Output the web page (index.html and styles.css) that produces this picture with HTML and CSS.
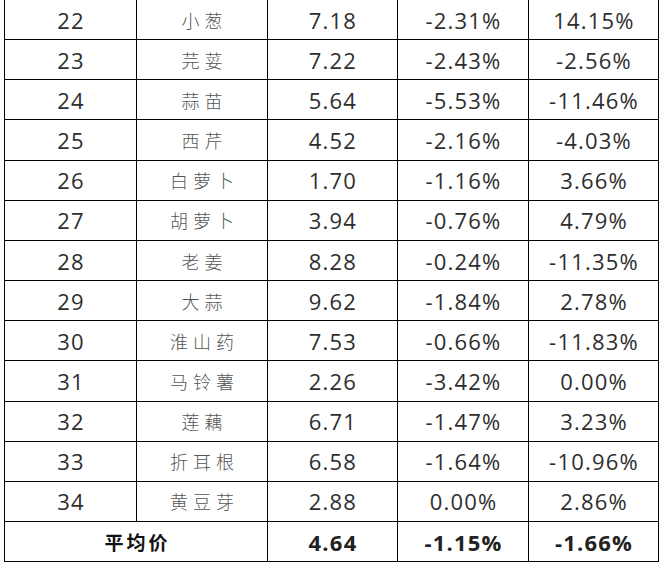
FILE: index.html
```html
<!DOCTYPE html>
<html lang="zh">
<head>
<meta charset="utf-8">
<link rel="stylesheet" href="styles.css">
</head>
<body>
<table class="price-table">
  <colgroup>
    <col class="c1"><col class="c2"><col class="c3"><col class="c4"><col class="c5">
  </colgroup>
  <tbody>
    <tr><td>22</td><td class="name">小葱</td><td>7.18</td><td>-2.31%</td><td>14.15%</td></tr>
    <tr><td>23</td><td class="name">芫荽</td><td>7.22</td><td>-2.43%</td><td>-2.56%</td></tr>
    <tr><td>24</td><td class="name">蒜苗</td><td>5.64</td><td>-5.53%</td><td>-11.46%</td></tr>
    <tr><td>25</td><td class="name">西芹</td><td>4.52</td><td>-2.16%</td><td>-4.03%</td></tr>
    <tr><td>26</td><td class="name">白萝卜</td><td>1.70</td><td>-1.16%</td><td>3.66%</td></tr>
    <tr><td>27</td><td class="name">胡萝卜</td><td>3.94</td><td>-0.76%</td><td>4.79%</td></tr>
    <tr><td>28</td><td class="name">老姜</td><td>8.28</td><td>-0.24%</td><td>-11.35%</td></tr>
    <tr><td>29</td><td class="name">大蒜</td><td>9.62</td><td>-1.84%</td><td>2.78%</td></tr>
    <tr><td>30</td><td class="name">淮山药</td><td>7.53</td><td>-0.66%</td><td>-11.83%</td></tr>
    <tr><td>31</td><td class="name">马铃薯</td><td>2.26</td><td>-3.42%</td><td>0.00%</td></tr>
    <tr><td>32</td><td class="name">莲藕</td><td>6.71</td><td>-1.47%</td><td>3.23%</td></tr>
    <tr><td>33</td><td class="name">折耳根</td><td>6.58</td><td>-1.64%</td><td>-10.96%</td></tr>
    <tr><td>34</td><td class="name">黄豆芽</td><td>2.88</td><td>0.00%</td><td>2.86%</td></tr>
    <tr class="avg"><td colspan="2" class="avg-label">平均价</td><td>4.64</td><td>-1.15%</td><td>-1.66%</td></tr>
  </tbody>
</table>
</body>
</html>
```
FILE: styles.css
```css
html, body {
  margin: 0;
  padding: 0;
  background: #ffffff;
}
body {
  padding-left: 4px;
}
.price-table {
  border-collapse: collapse;
  table-layout: fixed;
  width: 654px;
  margin-top: -1px;
  font-family: "Open Sans", "Noto Sans", "Noto Sans CJK SC", sans-serif;
  font-size: 22px;
  letter-spacing: 1.2px;
  color: #2e2e2e;
}
.c1 { width: 132px; }
.c2 { width: 131px; }
.c3 { width: 130px; }
.c4 { width: 131px; }
.c5 { width: 130px; }
.price-table td {
  border: 1px solid #000;
  text-align: center;
  vertical-align: middle;
  padding: 0 0 0 1px;
  height: 39.17px;
  line-height: 24px;
}
.price-table td.name {
  font-family: "Noto Sans CJK SC", sans-serif;
  font-weight: 300;
  font-size: 18px;
  letter-spacing: 5px;
  text-indent: 4px;
  color: #555;
}
.avg td {
  font-weight: 700;
  color: #222;
}
.avg td.avg-label {
  font-family: "Noto Sans CJK SC", sans-serif;
  font-size: 19px;
  letter-spacing: 3px;
  text-indent: 2px;
  color: #111;
}
```
